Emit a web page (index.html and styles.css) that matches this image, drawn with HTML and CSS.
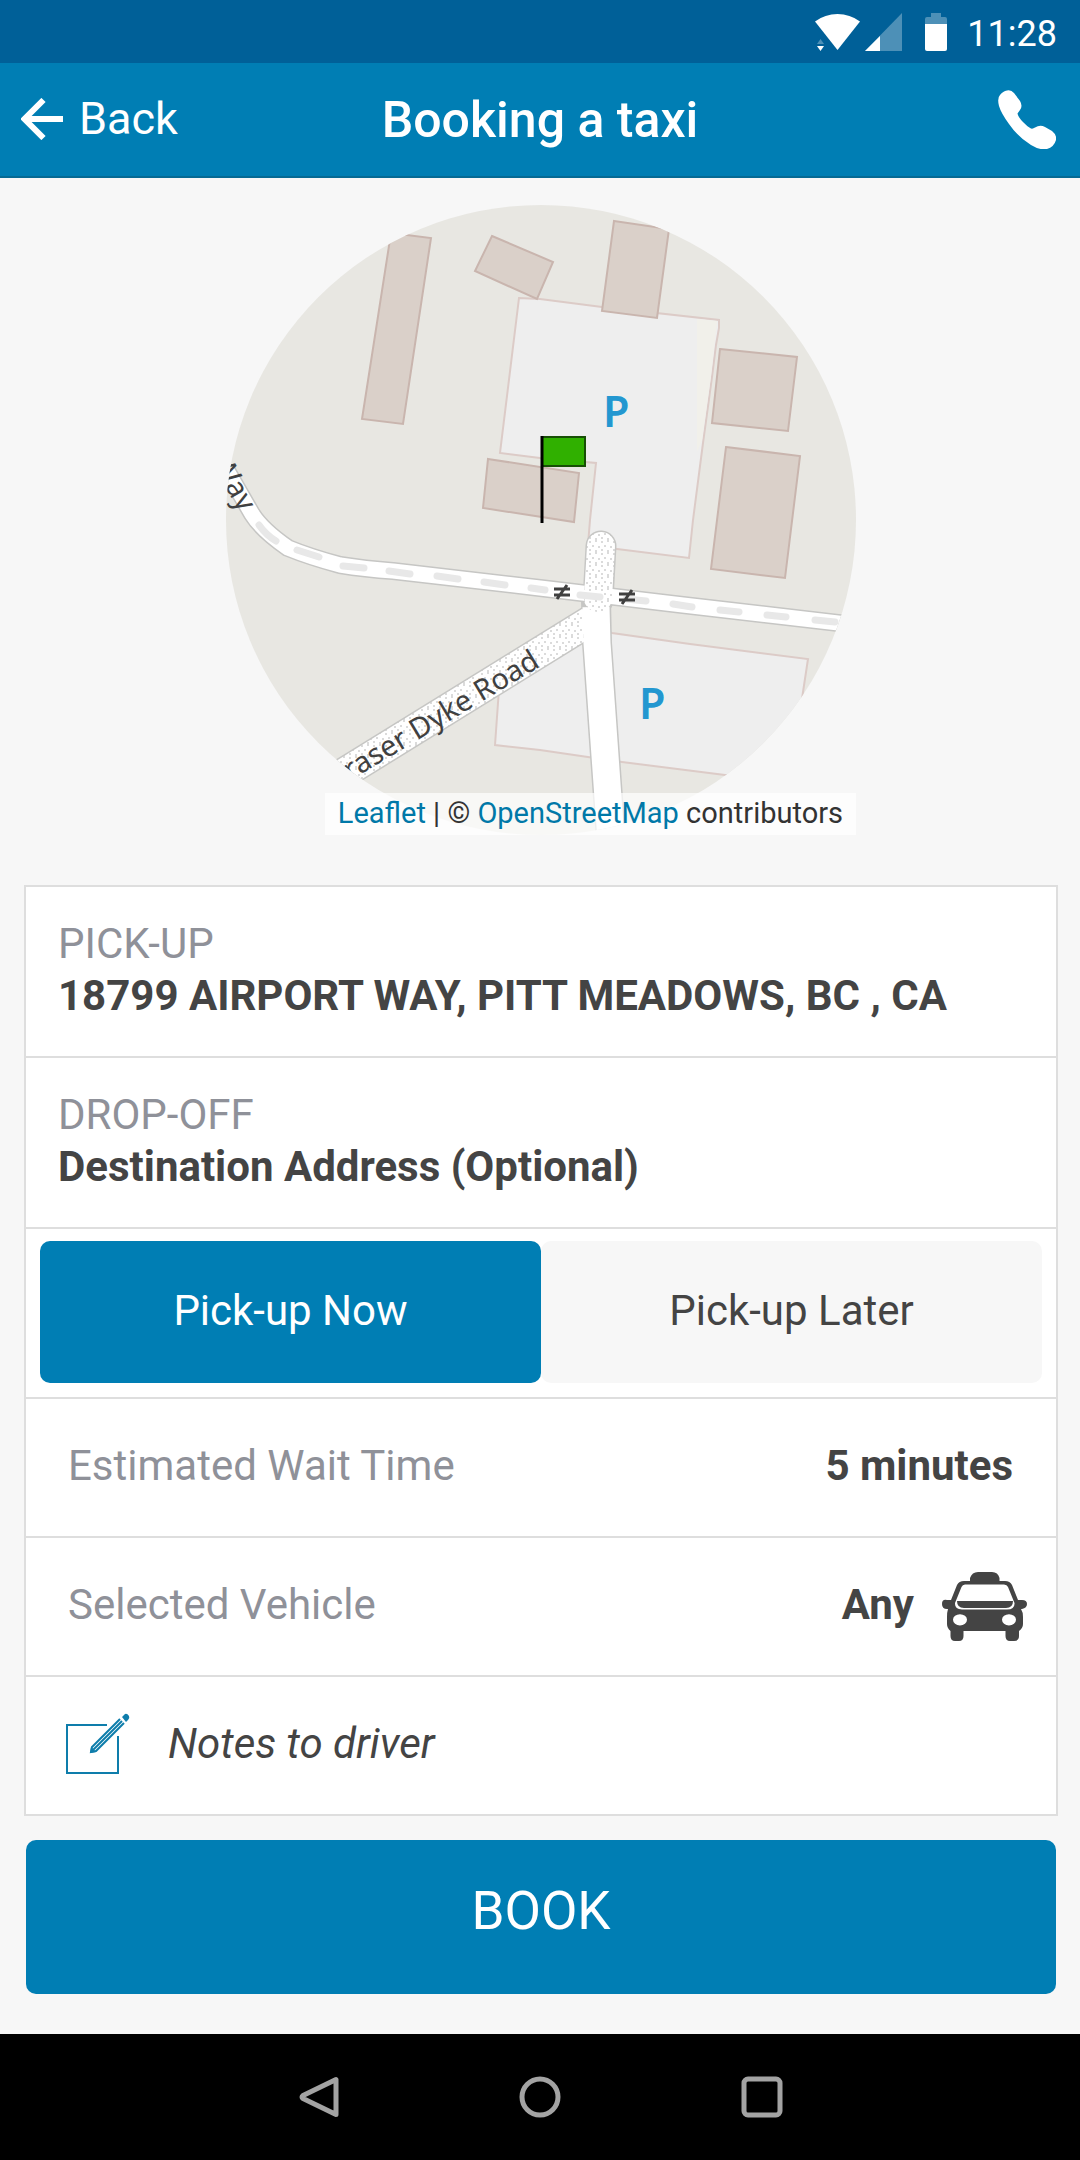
FILE: index.html
```html
<!DOCTYPE html>
<html lang="en">
<head>
<meta charset="utf-8">
<meta name="viewport" content="width=device-width, initial-scale=1">
<title>Booking a taxi</title>
<link rel="stylesheet" href="styles.css">
</head>
<body>
<div class="status-bar">
  <svg class="status-wifi" viewBox="0 0 46 38" width="46" height="38" aria-hidden="true">
    <path d="M0 8.500Q10 1 22.500 1T45 8.500L22.500 37Z" fill="#fff"/>
    <path d="M2 31 5.500 26 9 31Z" fill="#4d90b7"/>
    <path d="M2 33H9L5.500 38Z" fill="#fff"/>
  </svg>
  <svg class="status-signal" viewBox="0 0 37 38" width="37" height="38" aria-hidden="true">
    <path d="M0 38 37 0V38Z" fill="#4d90b7"/>
    <path d="M0 38 15 23V38Z" fill="#fff"/>
  </svg>
  <svg class="status-battery" viewBox="0 0 22 38" width="22" height="38" aria-hidden="true">
    <path d="M6 0H16V4H20Q22 4 22 6V12H0V6Q0 4 2 4H6Z" fill="#4d90b7"/>
    <path d="M0 11H22V36Q22 38 20 38H2Q0 38 0 36Z" fill="#fff"/>
  </svg>
  <time class="status-time">11:28</time>
</div>

<header class="app-header">
  <a class="back-link" href="#back">
    <svg viewBox="0 0 42 42" width="42" height="42" aria-hidden="true">
      <path d="M42 21H4M22.500 2 3.500 21 22.500 40" fill="none" stroke="#fff" stroke-width="6"/>
    </svg>
    <span>Back</span>
  </a>
  <h1 class="app-title">Booking a taxi</h1>
  <a class="call-link" href="#call" aria-label="Call">
    <svg viewBox="0 0 58 59" width="58" height="59" aria-hidden="true">
      <path d="M9 0.500Q13-.5 16 3L22 11Q25 16 22 20L19.500 23.500Q20 27 25 32T33 38.500Q35 39 37 37.500Q42 34.500 47 37L54 41Q59 45 58 50Q56 57 49 59Q42 60.500 33 55Q20 47 11 34Q3 23 1 16Q-1 8 2 5Q5 1 9 .5Z" fill="#fff"/>
    </svg>
  </a>
</header>

<main class="content">
  <section class="map" aria-label="Pick-up location map">
    <svg class="map-canvas" viewBox="226 205 630 630" aria-hidden="true">
      <defs>
        <pattern id="gravel" width="12" height="12" patternUnits="userSpaceOnUse">
          <rect width="12" height="12" fill="#fff"/>
          <g fill="#cfcfcf"><circle cx="2" cy="2" r="1"/><circle cx="8" cy="1" r="1"/><circle cx="5" cy="6" r="1"/><circle cx="11" cy="7" r="1"/><circle cx="2" cy="10" r="1"/><circle cx="8" cy="11" r="1"/></g>
        </pattern>
      </defs>
      <rect x="226" y="205" width="630" height="630" fill="#e8e7e2"/>
      <g fill="#eee" stroke="#dccbc7" stroke-width="2">
        <path d="M519 298 540 299 602 307 719 320V328L716 345 712 377 703 443 693 520 689 558 617 549 588 545 590 520 596 463 540 458 500 453Z"/>
        <path d="M500 675 600 625 612 633 690 644 808 659 803 692 790 784 725 775 622 762 540 750 495 745Z"/>
      </g>
      <path d="M697 319 717 321 711 376 702 440 697 452Z" fill="#f1f0ea"/>
      <g fill="#dad0c9" stroke="#c9b5ae" stroke-width="2">
        <path d="M391 233 431 238 403 424 362 419Z"/>
        <path d="M492 236 553 262 537 299 475 271Z"/>
        <path d="M614 221 669 229 657 318 602 311Z"/>
        <path d="M720 349 797 357 788 431 712 423Z"/>
        <path d="M726 447 800 456 785 578 711 569Z"/>
        <path d="M488 459 579 473 574 522 483 508Z"/>
      </g>
      <g fill="none" stroke-linejoin="round">
        <path d="M226 469 252 514Q262 530 288 548Q310 557 340 565Q365 569 393 571L540 588 683 605 856 625" stroke="#c6c6c4" stroke-width="18"/>
        <path d="M320 788 590 621" stroke="#c6c6c4" stroke-width="32"/>
        <path d="M601 546 598 600" stroke="#c6c6c4" stroke-width="31" stroke-linecap="round"/>
        <path d="M596 600 597 643 611 840" stroke="#c6c6c4" stroke-width="30"/>
        <path d="M320 788 590 621" stroke="url(#gravel)" stroke-width="29"/>
        <path d="M226 469 252 514Q262 530 288 548Q310 557 340 565Q365 569 393 571L540 588 683 605 856 625" stroke="#fff" stroke-width="15"/>
        <path d="M596 607 597 643 611 840" stroke="#fff" stroke-width="27"/>
        <path d="M601 546 598 598" stroke="url(#gravel)" stroke-width="28" stroke-linecap="round"/>
        <path d="M259 525Q266 535 276 541M297 550 319 557M343 566 364 568M389 571 410 574M437 576 458 579M484 582 505 585M531 588 545 590M580 595 600 597M626 599 646 601M673 604 692 607M720 610 739 612M767 615 786 617M815 620 835 622" stroke="#e8e8e8" stroke-width="7" stroke-linecap="round"/>
      </g>
      <g stroke="#404040" stroke-width="3" fill="none">
        <path d="M554 589H570M554 595H570M567 585 557 599"/>
        <path d="M619 594H635M619 600H635M632 590 622 604"/>
      </g>
      <text class="map-road" text-anchor="end" transform="translate(541 666) rotate(-31)">Fraser Dyke Road</text>
      <text class="map-road" text-anchor="end" transform="translate(240 513) rotate(60)">Way</text>
      <text class="map-parking" x="603" y="427">P</text>
      <text class="map-parking" x="639" y="719">P</text>
      <rect x="542" y="437" width="43" height="29" fill="#30b000" stroke="#174f05" stroke-width="2"/>
      <path d="M542 436V523" stroke="#000" stroke-width="3"/>
    </svg>
    <p class="map-credit"><a href="#leaflet">Leaflet</a> | © <a href="#osm">OpenStreetMap</a> contributors</p>
  </section>

  <form class="booking">
    <div class="card">
      <button type="button" class="address">
        <span class="address-label">PICK-UP</span>
        <span class="address-value">18799 AIRPORT WAY, PITT MEADOWS, BC , CA</span>
      </button>
      <button type="button" class="address">
        <span class="address-label">DROP-OFF</span>
        <span class="address-value">Destination Address (Optional)</span>
      </button>
      <div class="when" role="radiogroup" aria-label="Pick-up time">
        <label class="when-option"><input type="radio" name="when" checked><span>Pick-up Now</span></label>
        <label class="when-option"><input type="radio" name="when"><span>Pick-up Later</span></label>
      </div>
      <div class="row row-wait">
        <span class="row-label">Estimated Wait Time</span>
        <span class="row-value">5 minutes</span>
      </div>
      <button type="button" class="row">
        <span class="row-label">Selected Vehicle</span>
        <span class="row-value">Any</span>
        <svg class="taxi-icon" viewBox="0 0 85 69" width="85" height="69" aria-hidden="true">
          <path fill="#444" fill-rule="evenodd" d="M28 9V6Q30 0 36 0H50Q56 0 57.500 6V9H63Q68 9 70 13L76 28H80Q85 28 85 32T80 37H79Q81 40 81 45V52Q81 56 77 59V64Q77 69 72 69H68Q63.500 69 63.500 64V59H21.500V64Q21.500 69 17 69H13Q8.500 69 8.500 64V59Q5 56 5 52V45Q5 40 6 37H5Q0 37 0 32T5 28H9L15 13Q17 9 22 9ZM23 12.500Q20.500 12.500 19.500 15L13 31Q12.500 37.500 20 37.500H65Q73 37.500 72.500 31L66 15Q65 12.500 62 12.500ZM15 29H71Q71 36 64 36H22Q15 36 15 29ZM18 42.200A7 5.600 0 1 0 18 53.400A7 5.600 0 1 0 18 42.200ZM67 42.200A7 5.600 0 1 0 67 53.400A7 5.600 0 1 0 67 42.200Z"/>
        </svg>
      </button>
      <label class="row row-notes">
        <svg viewBox="0 0 64 62" width="64" height="62" aria-hidden="true">
          <g fill="none" stroke="#0e7dab" stroke-width="2">
            <path d="M41 12H1V60H52V23"/>
            <path d="M54 6 26 34 25 39 30 38 58 10M56 8 27 37"/>
          </g>
          <path d="M56 4 59 1Q61 0 63 3 64 5 62 7L60 9ZM24 40 25 34 30 39Z" fill="#0e7dab"/>
        </svg>
        <input class="notes-input" type="text" placeholder="Notes to driver" aria-label="Notes to driver">
      </label>
    </div>
    <button type="submit" class="book">BOOK</button>
  </form>
</main>

<nav class="system-nav" aria-label="System">
  <button type="button" aria-label="Back"><svg viewBox="0 0 42 42" width="42" height="42"><path d="M39 3.500V38.500L6 22.500Q4 21 6 19.500Z" fill="none" stroke="#a3a3a3" stroke-width="5" stroke-linejoin="round"/></svg></button>
  <button type="button" aria-label="Home"><svg viewBox="0 0 42 42" width="42" height="42"><circle cx="21" cy="21" r="18" fill="none" stroke="#a3a3a3" stroke-width="5"/></svg></button>
  <button type="button" aria-label="Recent apps"><svg viewBox="0 0 42 42" width="42" height="42"><rect x="3" y="3" width="36" height="36" rx="4" fill="none" stroke="#a3a3a3" stroke-width="5"/></svg></button>
</nav>
</body>
</html>
```
FILE: styles.css
```css
* {
  box-sizing: border-box;
}

body {
  margin: 0;
  min-height: 100vh;
  display: flex;
  flex-direction: column;
  background: #f7f7f7;
  color: #444;
  font-family: Roboto, sans-serif;
  font-size: 42px;
  line-height: 52px;
}

button,
input {
  margin: 0;
  padding: 0;
  border: 0;
  background: none;
  color: inherit;
  font: inherit;
}

svg {
  display: block;
  flex: none;
}

/* Status bar */
.status-bar {
  display: flex;
  justify-content: flex-end;
  align-items: center;
  height: 63px;
  padding-right: 23px;
  background: #006098;
  color: #fff;
}

.status-signal {
  margin-left: 4px;
}

.status-battery {
  margin: 0 20px 0 23px;
}

.status-time {
  padding-top: 4px;
  font-size: 36px;
}

/* Header */
.app-header {
  display: grid;
  grid-template-columns: 1fr auto 1fr;
  align-items: center;
  padding: 27px 24px 27px 24px;
  border-bottom: 2px solid #066a94;
  background: #007eb4;
  color: #fff;
}

.back-link {
  display: flex;
  align-items: center;
  gap: 16px;
  margin-left: -3px;
  padding-bottom: 2px;
  color: inherit;
  font-size: 45px;
  text-decoration: none;
}

.app-title {
  margin: 0;
  font-size: 50px;
  font-weight: 500;
  line-height: 58px;
}

.call-link {
  justify-self: end;
}

/* Content */
.content {
  padding: 27px 22px 40px 24px;
}

.map {
  position: relative;
  width: 630px;
  max-width: 100%;
  margin: 0 auto 50px;
}

.map-canvas {
  width: 100%;
  border-radius: 50%;
}

.map-road {
  fill: #404040;
  font-family: "Noto Sans", sans-serif;
  font-size: 29px;
}

.map-parking {
  fill: #2397d0;
  font-family: "Noto Sans", sans-serif;
  font-size: 43px;
  font-weight: 600;
}

.map-credit {
  position: absolute;
  right: 0;
  bottom: 0;
  margin: 0;
  padding: 0 13px 2px;
  background: rgba(255, 255, 255, 0.7);
  color: #333;
  font-size: 29px;
  line-height: 40px;
}

.map-credit a {
  color: #0078a8;
  text-decoration: none;
}

.card {
  border: 2px solid #dedede;
  background: #fff;
}

.card > * {
  width: 100%;
  border-bottom: 2px solid #dedede;
}

.card > :last-child {
  border-bottom: 0;
}

.address {
  display: flex;
  flex-direction: column;
  padding: 31px 32px 34px;
  text-align: left;
}

.address-label,
.row-label {
  color: #8f9199;
}

.address-value,
.row-value {
  font-weight: 700;
}

.when {
  display: grid;
  grid-template-columns: 1fr 1fr;
  padding: 12px 14px 14px;
}

.when-option {
  padding: 44px 0 46px;
  border-radius: 10px;
  background: #f7f7f7;
  text-align: center;
}

.when-option:has(:checked) {
  background: #007eb4;
  color: #fff;
}

.when-option input {
  position: absolute;
  opacity: 0;
}

.row {
  display: flex;
  align-items: center;
  min-height: 139px;
  padding: 0 29px 4px 42px;
  text-align: left;
}

.row-wait {
  padding-right: 43px;
}

.row-label {
  flex: 1;
}

.taxi-icon {
  margin: 4px 0 0 28px;
}

.row-notes {
  gap: 38px;
  min-height: 137px;
  padding-left: 40px;
}

.notes-input {
  flex: 1;
  min-width: 0;
  font-style: italic;
}

.notes-input::placeholder {
  color: inherit;
  opacity: 1;
}

.book {
  display: block;
  width: calc(100% - 4px);
  margin: 24px 2px 0;
  padding: 41px 0 53px;
  border-radius: 10px;
  background: #007eb4;
  color: #fff;
  font-size: 53px;
  line-height: 60px;
}

/* System navigation */
.system-nav {
  display: flex;
  justify-content: center;
  gap: 180px;
  margin-top: auto;
  padding: 42px 0;
  background: #000;
}
```
